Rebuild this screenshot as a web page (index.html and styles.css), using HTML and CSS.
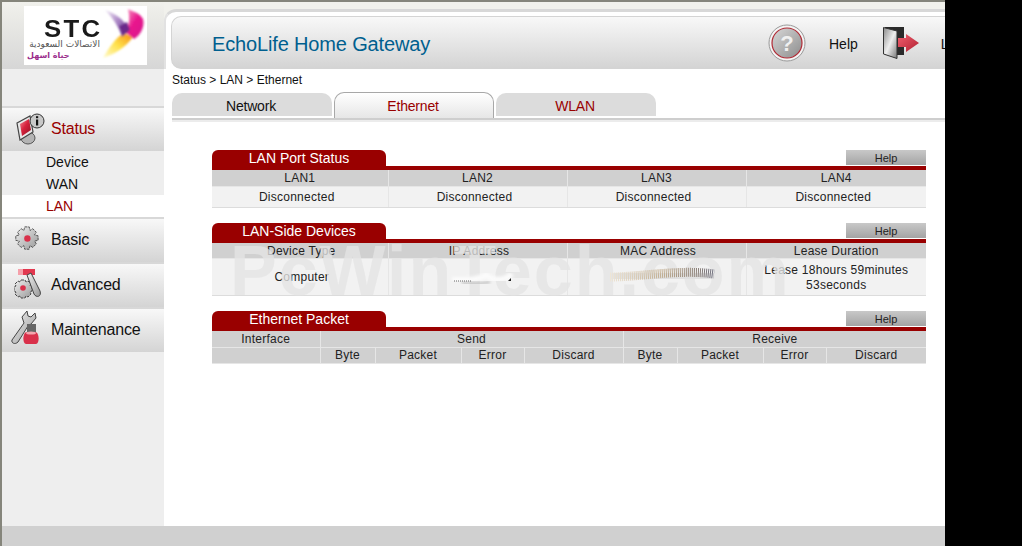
FILE: index.html
```html
<!DOCTYPE html>
<html lang="en">
<head>
    <meta charset="UTF-8">
    <title>EchoLife Home Gateway</title>
    <link rel="stylesheet" href="styles.css">
</head>
<body>
    <div class="page">
        <div class="columns">
            <div class="sidebar">
                <div class="logo-bar">
                    <div class="logo">
                        <div class="logo-text">
                            <div class="stc">STC</div>
                            <div class="ar-name" dir="rtl" lang="ar">الاتصالات السعودية</div>
                            <div class="ar-slogan" dir="rtl" lang="ar">حياة اسهل</div>
                        </div>
                        <svg class="swirl" width="47" height="58" viewBox="0 0 47 58">
                            <defs>
                                <linearGradient id="sw-y" x1="0" y1="1" x2="1" y2="0">
                                    <stop offset="0" stop-color="#fffbd0"/>
                                    <stop offset="0.5" stop-color="#ffe14a"/>
                                    <stop offset="1" stop-color="#f58a10"/>
                                </linearGradient>
                                <linearGradient id="sw-p" x1="0" y1="0" x2="1" y2="1">
                                    <stop offset="0" stop-color="#f4eef8"/>
                                    <stop offset="0.5" stop-color="#a883c4"/>
                                    <stop offset="1" stop-color="#5f2a86"/>
                                </linearGradient>
                                <linearGradient id="sw-m" x1="0" y1="0" x2="1" y2="1">
                                    <stop offset="0" stop-color="#f7a0c4"/>
                                    <stop offset="0.5" stop-color="#e8128c"/>
                                    <stop offset="1" stop-color="#d6208f"/>
                                </linearGradient>
                                <filter id="soft"><feGaussianBlur stdDeviation="0.9"/></filter>
                            </defs>
                            <g filter="url(#soft)">
                                <path d="M3 52 C9 42 15 32 24 27 L33 31 C26 41 15 48 3 52Z" fill="url(#sw-y)"/>
                                <path d="M5 4 C14 7 23 12 28 22 L22 31 C19 21 13 12 5 4Z" fill="url(#sw-p)"/>
                                <path d="M28 3 C33 6 39 6 43 13 C45 20 41 29 34 33 C31 31 28 28 25 26 C30 20 30 11 28 3Z" fill="url(#sw-m)"/>
                                <path d="M19 20 L27 16 L30 24 L23 30Z" fill="#6a2a8a"/>
                            </g>
                        </svg>
                    </div>
                </div>
                <div class="menu">
                    <div class="menu-item current">
                        <svg class="menu-icon icon-status" width="31" height="32" viewBox="0 0 31 32">
                            <defs>
                                <linearGradient id="scr" x1="0" y1="0" x2="1" y2="1">
                                    <stop offset="0" stop-color="#f28a96"/>
                                    <stop offset="0.45" stop-color="#d6213c"/>
                                    <stop offset="1" stop-color="#8f1222"/>
                                </linearGradient>
                            </defs>
                            <ellipse cx="13" cy="25" rx="7" ry="6" fill="#b4b4b4" stroke="#555"/>
                            <path d="M2 10 L15 3 L18 19 L5 27Z" fill="#e8e8e8" stroke="#444" stroke-width="1.2"/>
                            <path d="M5 11 L14 6 L16 17 L7 23Z" fill="url(#scr)"/>
                            <circle cx="22" cy="8" r="7" fill="#c8c8c8" stroke="#333"/>
                            <rect x="21" y="6.5" width="2.2" height="6" fill="#111"/>
                            <rect x="21" y="3.2" width="2.2" height="2" fill="#111"/>
                        </svg>
                        <span>Status</span>
                    </div>
                    <ul class="submenu">
                        <li>Device</li>
                        <li>WAN</li>
                        <li class="active">LAN</li>
                    </ul>
                    <div class="menu-item">
                        <svg class="menu-icon icon-basic" width="25" height="27" viewBox="0 0 28 28">
                            <defs>
                                <linearGradient id="gear" x1="0" y1="0" x2="1" y2="1">
                                    <stop offset="0" stop-color="#f0f0f0"/>
                                    <stop offset="1" stop-color="#9a9a9a"/>
                                </linearGradient>
                            </defs>
                            <path d="M12 1h5l1 4 3-2 4 4-2 3 4 1v5l-4 1 2 3-4 4-3-2-1 4h-5l-1-4-3 2-4-4 2-3-4-1v-5l4-1-2-3 4-4 3 2z" fill="url(#gear)" stroke="#444" stroke-dasharray="3 1"/>
                            <circle cx="15" cy="14" r="3.6" fill="#d9304a"/>
                        </svg>
                        <span>Basic</span>
                    </div>
                    <div class="menu-item">
                        <svg class="menu-icon icon-adv" width="28" height="30" viewBox="0 0 28 30">
                            <rect x="4" y="0" width="17" height="6" fill="#e2384f"/>
                            <rect x="4" y="0" width="5" height="6" fill="#f5a0aa"/>
                            <path d="M7 11h4l1 2 2-1 3 3-1 2 2 1v4l-2 1 1 2-3 3-2-1-1 2H7l-1-2-2 1-3-3 1-2-2-1v-4l2-1-1-2 3-3 2 1z" fill="url(#gear)" stroke="#444" stroke-dasharray="3 1"/>
                            <circle cx="9" cy="19" r="2.8" fill="#d9304a"/>
                            <path d="M13 6 L17 4 L26 22 C28 28 22 29 20 25Z" fill="url(#gear)" stroke="#444"/>
                        </svg>
                        <span>Advanced</span>
                    </div>
                    <div class="menu-item">
                        <svg class="menu-icon icon-maint" width="28" height="34" viewBox="0 0 28 34">
                            <path d="M1 29 L13 12 L11 6 L16 0 L17 5 L20 6 L24 2 L25 7 L20 13 L17 15 L7 31 C4 34 0 32 1 29Z" fill="url(#gear)" stroke="#444"/>
                            <rect x="16" y="13" width="9" height="8" fill="#666"/>
                            <path d="M15 21 H25 C29 24 28 33 25 33 H15 C12 33 11 24 15 21Z" fill="#d9304a"/>
                            <ellipse cx="20" cy="22" rx="5" ry="1.6" fill="#f3a5ae"/>
                        </svg>
                        <span>Maintenance</span>
                    </div>
                </div>
            </div>
            <div class="main">
                <div class="top-frame">
                    <div class="title-bar">
                        <div class="title">EchoLife Home Gateway</div>
                        <div class="top-links">
                            <svg class="help-icon" width="38" height="38" viewBox="0 0 38 38">
                                <defs>
                                    <linearGradient id="help-g" x1="0" y1="0" x2="1" y2="1">
                                        <stop offset="0" stop-color="#d8d8d8"/>
                                        <stop offset="1" stop-color="#8c8c8c"/>
                                    </linearGradient>
                                </defs>
                                <circle cx="19" cy="19" r="18" fill="#f4f4f4" stroke="#999"/>
                                <circle cx="19" cy="19" r="15" fill="url(#help-g)" stroke="#b02a35" stroke-width="1.2"/>
                                <text x="19" y="27" class="help-mark" text-anchor="middle">?</text>
                            </svg>
                            <span class="help-label">Help</span>
                            <svg class="door" width="36" height="32" viewBox="0 0 36 32">
                                <defs>
                                    <linearGradient id="door-g" x1="0" y1="0" x2="1" y2="1">
                                        <stop offset="0" stop-color="#8a8a8a"/>
                                        <stop offset="0.5" stop-color="#eeeeee"/>
                                        <stop offset="1" stop-color="#777"/>
                                    </linearGradient>
                                    <linearGradient id="arrow-g" x1="0" y1="0" x2="1" y2="1">
                                        <stop offset="0" stop-color="#f0606f"/>
                                        <stop offset="1" stop-color="#b01f30"/>
                                    </linearGradient>
                                </defs>
                                <rect x="2" y="0" width="19" height="28" fill="#2a2a2a"/>
                                <path d="M0.5 0.5 L14 4 L14 31.5 L0.5 27Z" fill="url(#door-g)" stroke="#333"/>
                                <path d="M15 11 H23 V7 L36 16 L23 25 V20 H15Z" fill="url(#arrow-g)"/>
                            </svg>
                            <span class="logout-label">L</span>
                        </div>
                    </div>
                </div>
                <div class="crumb">Status &gt; LAN &gt; Ethernet</div>
                <div class="tabs">
                    <div class="tab">Network</div>
                    <div class="tab on">Ethernet</div>
                    <div class="tab off">WLAN</div>
                </div>
                <div class="content">
                    <div class="section">
                        <div class="section-head">
                            <div class="section-title">LAN Port Status</div>
                            <div class="help-btn">Help</div>
                        </div>
                        <table>
                            <colgroup><col class="c-1"><col class="c-2"><col class="c-2"><col class="c-3"></colgroup>
                            <tr class="th"><td>LAN1</td><td>LAN2</td><td>LAN3</td><td>LAN4</td></tr>
                            <tr class="row state"><td>Disconnected</td><td>Disconnected</td><td>Disconnected</td><td>Disconnected</td></tr>
                        </table>
                    </div>
                    <div class="section">
                        <div class="section-head">
                            <div class="section-title">LAN-Side Devices</div>
                            <div class="help-btn">Help</div>
                        </div>
                        <table>
                            <colgroup><col class="c-1"><col class="c-2"><col class="c-2"><col class="c-3"></colgroup>
                            <tr class="th low"><td>Device Type</td><td>IP Address</td><td>MAC Address</td><td>Lease Duration</td></tr>
                            <tr class="row tall"><td>Computer</td><td></td><td></td><td>Lease 18hours 59minutes<br>53seconds</td></tr>
                        </table>
                    </div>
                    <div class="section">
                        <div class="section-head">
                            <div class="section-title">Ethernet Packet</div>
                            <div class="help-btn">Help</div>
                        </div>
                        <table>
                            <colgroup>
                                <col class="c-if"><col class="c-byte"><col class="c-pkt"><col class="c-err"><col class="c-dis">
                                <col class="c-byte2"><col class="c-pkt"><col class="c-err"><col class="c-dis2">
                            </colgroup>
                            <tr class="th"><td>Interface</td><td colspan="4">Send</td><td colspan="4">Receive</td></tr>
                            <tr class="th"><td></td><td>Byte</td><td>Packet</td><td>Error</td><td>Discard</td><td>Byte</td><td>Packet</td><td>Error</td><td>Discard</td></tr>
                        </table>
                    </div>
                    <div class="watermark">PcWinTech.com</div>
                    <svg class="smudge" width="290" height="30" viewBox="0 0 290 30">
                        <defs>
                            <linearGradient id="mac-g" x1="0" y1="0" x2="1" y2="0">
                                <stop offset="0" stop-color="#efe6d6"/>
                                <stop offset="0.5" stop-color="#c2ae90"/>
                                <stop offset="0.85" stop-color="#8a7f78"/>
                                <stop offset="1" stop-color="#6f7080"/>
                            </linearGradient>
                            <filter id="blur2"><feGaussianBlur stdDeviation="1.6"/></filter>
                        </defs>
                        <path d="M22 21 C32 22 42 22 50 20" fill="none" stroke="#b4b4b4" stroke-width="2" filter="url(#blur2)"/>
                        <path d="M12 18 C24 18 38 19 46 13 C52 18 62 21 72 12" fill="none" stroke="#fbfbfb" stroke-width="6" filter="url(#blur2)"/>
                        <path d="M14 19 H32" fill="none" stroke="#666" stroke-dasharray="1 1"/>
                        <path d="M71 16 l-3 3 h3z" fill="#222"/>
                        <path d="M172 16 C200 16 240 9 274 14" fill="none" stroke="#e0e0e0" stroke-width="15" filter="url(#blur2)"/>
                        <path d="M170 15 C200 15 240 7 274 12" fill="none" stroke="url(#mac-g)" stroke-width="9" stroke-dasharray="1 1"/>
                    </svg>
                </div>
            </div>
        </div>
        <div class="footer"></div>
    </div>
</body>
</html>
```

FILE: styles.css
```css
* {
    margin: 0;
    padding: 0;
    box-sizing: border-box;
}

html, body {
    height: 100%;
    overflow: hidden;
}

body {
    background: #000;
    font-family: "Liberation Sans", Arial, sans-serif;
    font-size: 12px;
    color: #222;
}

.page {
    width: 945px;
    height: 546px;
    background: #fff;
    border-top: 2px solid #85857b;
    border-left: 2px solid #85857b;
    display: flex;
    flex-direction: column;
}

.columns {
    flex: 1;
    display: flex;
    min-height: 0;
}

.footer {
    height: 20px;
    background: #d0d0d0;
}

/* left column */
.sidebar {
    width: 162px;
    background: #eeeeee;
}

.logo-bar {
    height: 67px;
    padding: 4px 0 0 22px;
    background: linear-gradient(#f1f1ec, #d6d6d6);
}

.logo {
    width: 123px;
    height: 59px;
    background: #fff;
    display: flex;
}

.logo-text {
    width: 76px;
    padding: 13px 0 0 3px;
}

.stc {
    margin-left: 17px;
    font-size: 23px;
    line-height: 20px;
    font-weight: bold;
    letter-spacing: 2px;
    color: #1a1a1a;
    transform: scaleX(1.12);
    transform-origin: left;
}

.ar-name {
    font-family: "DejaVu Sans", sans-serif;
    font-size: 9px;
    line-height: 11px;
    color: #555;
    white-space: nowrap;
    text-align: right;
}

.ar-slogan {
    font-family: "DejaVu Sans", sans-serif;
    font-size: 8px;
    font-weight: bold;
    line-height: 11px;
    color: #9b2d8c;
    text-align: left;
    white-space: nowrap;
}

.swirl {
    flex: none;
}

.menu {
    padding-top: 37px;
}

.menu-item {
    height: 45px;
    border-top: 2px solid #d8d8d8;
    background: linear-gradient(#f8f8f8, #d4d4d4);
    display: flex;
    align-items: center;
    padding: 0 0 2px 49px;
    font-size: 16px;
    letter-spacing: -0.2px;
    color: #111;
    position: relative;
}

.menu-item.current {
    color: #990000;
}

.menu-icon {
    position: absolute;
}

.icon-status { left: 13px; top: 5px; }
.icon-basic { left: 12px; top: 6px; }
.icon-adv { left: 12px; top: 5px; }
.icon-maint { left: 9px; top: 2px; }

.submenu {
    list-style: none;
    font-size: 14px;
    color: #111;
}

.submenu li {
    height: 22px;
    line-height: 22px;
    padding-left: 44px;
}

.submenu .active {
    background: #fff;
    color: #990000;
}

/* right column */
.main {
    flex: 1;
    min-width: 0;
    background: #fff;
}

.top-frame {
    height: 67px;
    background: #f1f1ec;
    padding-top: 7px;
}

.title-bar {
    height: 60px;
    border-top: 3px solid #d8d8d8;
    border-left: 2px solid #e2e2e2;
    border-top-left-radius: 12px;
    padding: 4px 0 0 5px;
    background: #fff;
}

.title {
    height: 53px;
    padding: 16px 0 0 40px;
    border: 1px solid #d4d4d4;
    border-right: none;
    border-radius: 10px 0 0 10px;
    background: linear-gradient(#f8f8f8, #d4d4d4);
    font-size: 20px;
    letter-spacing: -0.15px;
    color: #005f8f;
}

.top-links {
    position: absolute;
    left: 768px;
    top: 24px;
    width: 177px;
    height: 38px;
    overflow: hidden;
    display: flex;
    align-items: center;
    font-size: 14px;
    color: #111;
}

.help-icon,
.door {
    flex: none;
}

.help-mark {
    font-family: "Liberation Sans", sans-serif;
    font-size: 22px;
    font-weight: bold;
    fill: #f0f0f0;
}

.help-label {
    margin-left: 23px;
    padding-top: 2px;
}

.door {
    margin-left: 25px;
}

.logout-label {
    margin-left: 22px;
    padding-top: 2px;
}

.crumb {
    height: 22px;
    line-height: 22px;
    padding-left: 8px;
    font-size: 12px;
    color: #111;
}

.tabs {
    margin-left: 8px;
    height: 29px;
    padding-top: 1px;
    display: flex;
    gap: 2px;
    border-bottom: 2px solid #cecece;
    box-shadow: 0 2px 0 #ececec;
}

.tab {
    width: 160px;
    height: 23px;
    margin-top: 1px;
    padding-right: 2px;
    line-height: 26px;
    text-align: center;
    font-size: 14px;
    letter-spacing: -0.2px;
    background: #dcdcdc;
    border-radius: 10px 10px 0 0;
    color: #111;
}

.tab.on {
    height: 26px;
    margin-top: 0;
    background: linear-gradient(#fff, #e6e6e6);
    border: 1px solid #a8a8a8;
    border-bottom: none;
    color: #990000;
}

.tab.off {
    color: #990000;
}

.content {
    position: relative;
    padding: 30px 19px 0 48px;
}

.section {
    width: 714px;
    margin-bottom: 15px;
}

.section-head {
    height: 20px;
    border-bottom: 4px solid #990000;
    display: flex;
    justify-content: space-between;
}

.section-title {
    width: 174px;
    height: 16px;
    line-height: 16px;
    background: #990000;
    border-radius: 6px 6px 0 0;
    color: #fff;
    font-size: 14px;
    text-align: center;
}

.help-btn {
    width: 80px;
    height: 15px;
    line-height: 16px;
    background: linear-gradient(#c8c8c8, #a4a4a4);
    font-size: 11px;
    text-align: center;
    color: #222;
}

table {
    width: 714px;
    table-layout: fixed;
    border-collapse: collapse;
    font-size: 12px;
    letter-spacing: 0.25px;
    text-align: center;
}

td {
    border-left: 1px solid #e6e6e6;
}

td:first-child {
    border-left: none;
}

.th td {
    height: 16px;
    background: #d0d0d0;
    border-bottom: 1px solid #e6e6e6;
}

.th.low td {
    padding-top: 1px;
}

.th.low td:nth-child(-n+3) {
    padding-left: 3px;
}

.row td {
    height: 21px;
    background: #f2f2f2;
    border-bottom: 1px solid #dcdcdc;
}

.state td {
    padding-right: 6px;
}

.row.tall td {
    height: 37px;
    padding-top: 1px;
    line-height: 15px;
}

.row.tall td:first-child {
    padding-left: 4px;
}

.c-1 { width: 176px; }
.c-2 { width: 179px; }
.c-3 { width: 180px; }

.c-if { width: 108px; }
.c-byte { width: 55px; }
.c-byte2 { width: 54px; }
.c-pkt { width: 86px; }
.c-err { width: 63px; }
.c-dis { width: 99px; }
.c-dis2 { width: 100px; }

.watermark {
    position: absolute;
    left: 66px;
    top: 116px;
    font-size: 70px;
    line-height: 70px;
    font-weight: bold;
    letter-spacing: 2px;
    white-space: nowrap;
    color: rgba(228, 228, 228, 0.78);
}

.smudge {
    position: absolute;
    left: 276px;
    top: 142px;
}
```
